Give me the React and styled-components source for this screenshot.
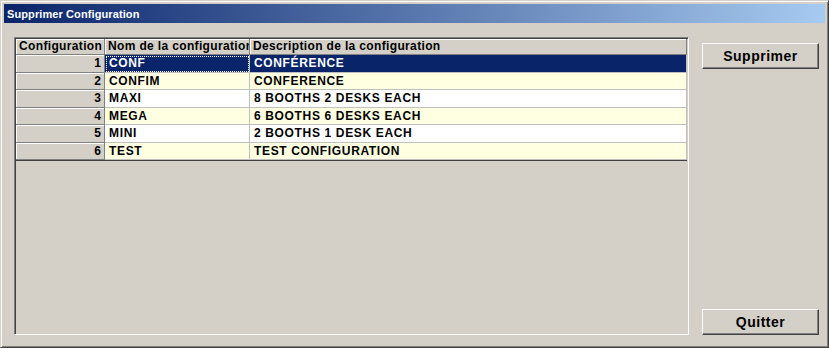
import React, { useState } from "react";
import styled, { createGlobalStyle } from "styled-components";

const GlobalStyle = createGlobalStyle`
  html, body {
    margin: 0;
    padding: 0;
    background: #ffffff;
  }
  * {
    box-sizing: border-box;
  }
`;

const configurations = [
  { id: 1, name: "CONF", description: "CONFÉRENCE" },
  { id: 2, name: "CONFIM", description: "CONFERENCE" },
  { id: 3, name: "MAXI", description: "8 BOOTHS 2 DESKS EACH" },
  { id: 4, name: "MEGA", description: "6 BOOTHS 6 DESKS EACH" },
  { id: 5, name: "MINI", description: "2 BOOTHS 1 DESK EACH" },
  { id: 6, name: "TEST", description: "TEST CONFIGURATION" },
];

const Window = styled.div`
  width: 829px;
  height: 348px;
  display: flex;
  flex-direction: column;
  background: #d4d0c8;
  border: 1px solid;
  border-color: #d4d0c8 #404040 #404040 #d4d0c8;
  box-shadow: inset 1px 1px 0 #ffffff, inset -1px -1px 0 #808080;
  padding: 3px;
  font-family: "Liberation Sans", Arial, sans-serif;
  font-size: 12px;
  font-weight: bold;
  color: #000000;
`;

const TitleBar = styled.div`
  height: 19px;
  display: flex;
  align-items: center;
  padding: 0 3px;
  background: linear-gradient(to right, #0a246a, #a6caf0);
  color: #ffffff;
  font-size: 11px;
  letter-spacing: 0.1px;
  font-weight: bold;
`;

const Body = styled.div`
  flex: 1;
  display: flex;
  gap: 13px;
  padding: 14px 6px 9px 10px;
`;

const GridFrame = styled.div`
  flex: 1;
  display: flex;
  flex-direction: column;
  border: 1px solid;
  border-color: #808080 #ffffff #ffffff #808080;
  box-shadow: inset 1px 1px 0 #404040, inset -1px -1px 0 #d4d0c8;
  padding: 1px;
  background: #d4d0c8;
  overflow: hidden;
`;

const Rows = styled.div`
  display: grid;
  grid-template-columns: 89px 145px 1fr;
  border-bottom: 1px solid #404040;
`;

const HeaderCell = styled.div`
  height: 16px;
  line-height: 15px;
  padding: 0 3px;
  letter-spacing: 0.35px;
  background: #d4d0c8;
  border-right: 1px solid #808080;
  border-bottom: 1px solid #808080;
  box-shadow: inset 1px 1px 0 #ffffff;
  white-space: nowrap;
  overflow: hidden;
`;

const NumCell = styled.div`
  height: 17.5px;
  line-height: 16px;
  padding: 0 3px;
  text-align: right;
  background: #d4d0c8;
  border-right: 1px solid #808080;
  border-bottom: 1px solid #808080;
  box-shadow: inset 1px 1px 0 #ffffff;
`;

const DataCell = styled.div`
  height: 17.5px;
  line-height: 16px;
  padding: 0 4px;
  white-space: nowrap;
  overflow: hidden;
  letter-spacing: 0.65px;
  background: ${(p) => (p.$selected ? "#0a246a" : p.$odd ? "#ffffff" : "#ffffe1")};
  color: ${(p) => (p.$selected ? "#ffffff" : "#000000")};
  border-right: 1px solid #c0c0c0;
  border-bottom: 1px solid #c0c0c0;
  outline: ${(p) => (p.$focus ? "1px dotted #ffffff" : "none")};
  outline-offset: -2px;
`;

const ButtonColumn = styled.div`
  width: 117px;
  display: flex;
  flex-direction: column;
  justify-content: space-between;
  padding-top: 6px;
`;

const Button = styled.button`
  height: 26px;
  width: 100%;
  background: #d4d0c8;
  border: 1px solid;
  border-color: #ffffff #404040 #404040 #ffffff;
  box-shadow: inset -1px -1px 0 #808080, inset 1px 1px 0 #d4d0c8;
  font-family: "Liberation Sans", Arial, sans-serif;
  font-size: 14px;
  font-weight: bold;
  letter-spacing: 0.5px;
  color: #000000;
  padding: 0;
  cursor: pointer;
`;

const App = () => {
  const [selected, setSelected] = useState(1);
  return (
    <>
      <GlobalStyle />
      <Window>
        <TitleBar>Supprimer Configuration</TitleBar>
        <Body>
          <GridFrame>
            <Rows>
              <HeaderCell>Configuration</HeaderCell>
              <HeaderCell>Nom de la configuration</HeaderCell>
              <HeaderCell>Description de la configuration</HeaderCell>
              {configurations.map((c, i) => (
                <React.Fragment key={c.id}>
                  <NumCell onClick={() => setSelected(c.id)}>{c.id}</NumCell>
                  <DataCell
                    $selected={selected === c.id}
                    $focus={selected === c.id}
                    $odd={i % 2 === 0}
                    onClick={() => setSelected(c.id)}
                  >
                    {c.name}
                  </DataCell>
                  <DataCell
                    $selected={selected === c.id}
                    $odd={i % 2 === 0}
                    onClick={() => setSelected(c.id)}
                  >
                    {c.description}
                  </DataCell>
                </React.Fragment>
              ))}
            </Rows>
          </GridFrame>
          <ButtonColumn>
            <Button>Supprimer</Button>
            <Button>Quitter</Button>
          </ButtonColumn>
        </Body>
      </Window>
    </>
  );
};

export default App;
